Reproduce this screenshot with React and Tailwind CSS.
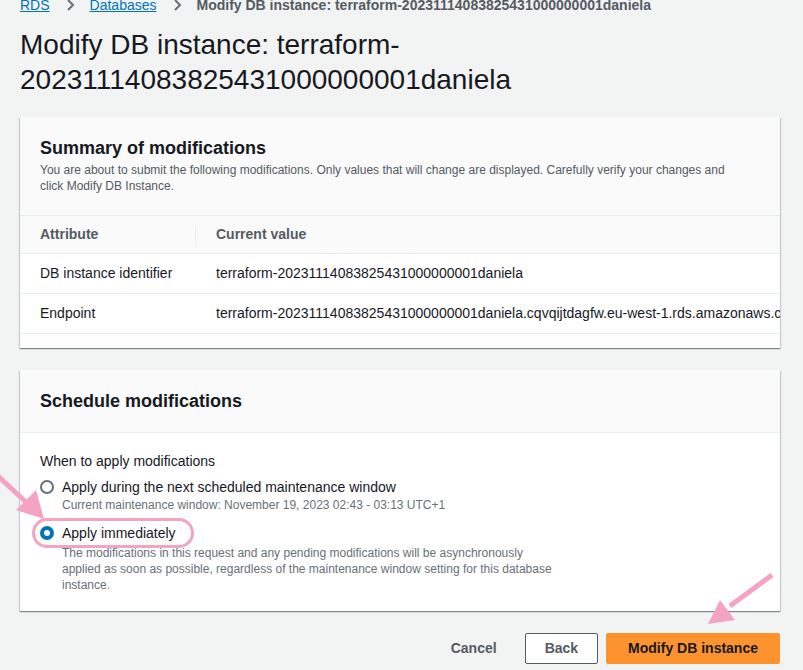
import React from "react";

const rows = [
  { attr: "DB instance identifier", value: "terraform-20231114083825431000000001daniela" },
  {
    attr: "Endpoint",
    value: "terraform-20231114083825431000000001daniela.cqvqijtdagfw.eu-west-1.rds.amazonaws.com",
  },
];

const cardShadow =
  "shadow-[0_1px_1px_0_rgba(0,28,36,0.3),1px_1px_1px_0_rgba(0,28,36,0.15),-1px_1px_1px_0_rgba(0,28,36,0.15)]";

function Chevron() {
  return (
    <svg width="16" height="16" viewBox="0 0 16 16" className="mx-3 text-[#687078]">
      <path d="M6 3l5 5-5 5" fill="none" stroke="currentColor" strokeWidth="2" />
    </svg>
  );
}

function Radio({ checked }) {
  return checked ? (
    <span className="mt-[3px] flex h-[14px] w-[14px] shrink-0 items-center justify-center rounded-full bg-[#0073bb]">
      <span className="h-[6px] w-[6px] rounded-full bg-white" />
    </span>
  ) : (
    <span className="mt-[3px] h-[14px] w-[14px] shrink-0 rounded-full border-2 border-[#687078] bg-white" />
  );
}

export default function App() {
  return (
    <div
      className="relative min-h-[670px] overflow-hidden bg-[#f2f3f3] pl-5 pr-[23px] text-[#16191f]"
      style={{ fontFamily: '"Liberation Sans", Arial, sans-serif' }}
    >
      {/* breadcrumb */}
      <div className="-mt-[5px] flex items-center text-[14px] leading-5">
        <span className="text-[#0073bb] underline">RDS</span>
        <Chevron />
        <span className="text-[#0073bb] underline">Databases</span>
        <Chevron />
        <span className="font-bold text-[#545b64]">
          Modify DB instance: terraform-20231114083825431000000001daniela
        </span>
      </div>

      <h1 className="mt-[12px] text-[28px] leading-[35px] font-normal">
        Modify DB instance: terraform-
        <br />
        20231114083825431000000001daniela
      </h1>

      {/* summary card */}
      <div className={`mt-[20px] overflow-hidden bg-white ${cardShadow}`}>
        <div className="bg-[#fafafa] px-5 pt-[20px] pb-[21px]">
          <h2 className="text-[18px] leading-[22px] font-bold">Summary of modifications</h2>
          <p className="mt-[3px] text-[12px] leading-4 text-[#545b64]">
            You are about to submit the following modifications. Only values that will change are
            displayed. Carefully verify your changes and
            <br />
            click Modify DB Instance.
          </p>
        </div>
        <div className="border-t border-[#eaeded]">
          <div className="flex h-[38px] items-center border-b border-[#eaeded] bg-[#fafafa] text-[14px] font-bold text-[#545b64]">
            <div className="flex w-[176px] shrink-0 items-center justify-between pl-5">
              <span>Attribute</span>
              <span className="h-5 w-px bg-[#eaeded]" />
            </div>
            <div className="pl-5">Current value</div>
          </div>
          {rows.map((r) => (
            <div
              key={r.attr}
              className="flex h-10 items-center border-b border-[#eaeded] text-[14px] whitespace-nowrap"
            >
              <div className="w-[176px] shrink-0 pl-5">{r.attr}</div>
              <div className="pl-5">{r.value}</div>
            </div>
          ))}
          <div className="h-[14px]" />
        </div>
      </div>

      {/* schedule card */}
      <div className={`mt-[22px] bg-white ${cardShadow}`}>
        <div className="flex h-[63px] items-center border-b border-[#eaeded] bg-[#fafafa] px-5">
          <h2 className="text-[18px] leading-[22px] font-bold">Schedule modifications</h2>
        </div>
        <div className="px-5 pt-[18px] pb-[18px] text-[14px]">
          <div className="leading-5">When to apply modifications</div>
          <div className="mt-[6px] flex gap-2">
            <Radio />
            <div>
              <div className="leading-5">Apply during the next scheduled maintenance window</div>
              <div className="text-[12px] leading-4 text-[#687078]">
                Current maintenance window: November 19, 2023 02:43 - 03:13 UTC+1
              </div>
            </div>
          </div>
          <div className="mt-[10px] flex gap-2">
            <Radio checked />
            <div>
              <div className="relative leading-5">
                Apply immediately
                <span className="absolute -top-[5px] -left-[30px] h-[30px] w-[162px] rounded-[15px] border-[3px] border-[#f4a3c3]" />
              </div>
              <div className="pt-[2px] text-[12px] leading-4 whitespace-nowrap text-[#687078]">
                The modifications in this request and any pending modifications will be
                asynchronously
                <br />
                applied as soon as possible, regardless of the maintenance window setting for this
                database
                <br />
                instance.
              </div>
            </div>
          </div>
        </div>
      </div>

      {/* actions */}
      <div className="mt-[21px] flex items-center justify-end gap-2 text-[14px] font-bold">
        <button className="px-5 py-[6px] text-[#545b64]">Cancel</button>
        <button className="h-[31px] rounded-[2px] border border-[#545b64] bg-white px-[19px] text-[#545b64]">
          Back
        </button>
        <button className="h-[31px] rounded-[2px] bg-[#fd932f] px-[22px] text-[#16191f]">
          Modify DB instance
        </button>
      </div>

      {/* annotation arrows */}
      <svg className="pointer-events-none absolute top-[469px] left-0" width="60" height="60" viewBox="0 0 60 60">
        <line x1="-2" y1="7" x2="28" y2="35" stroke="#f4a3c3" strokeWidth="5" />
        <polygon points="44,50 16,41 36,21" fill="#f4a3c3" />
      </svg>
      <svg className="pointer-events-none absolute top-[568px] left-[700px]" width="80" height="65" viewBox="0 0 80 65">
        <line x1="72" y1="7" x2="30" y2="38" stroke="#f4a3c3" strokeWidth="5" />
        <polygon points="8,56 20,32 35,52" fill="#f4a3c3" />
      </svg>
    </div>
  );
}
